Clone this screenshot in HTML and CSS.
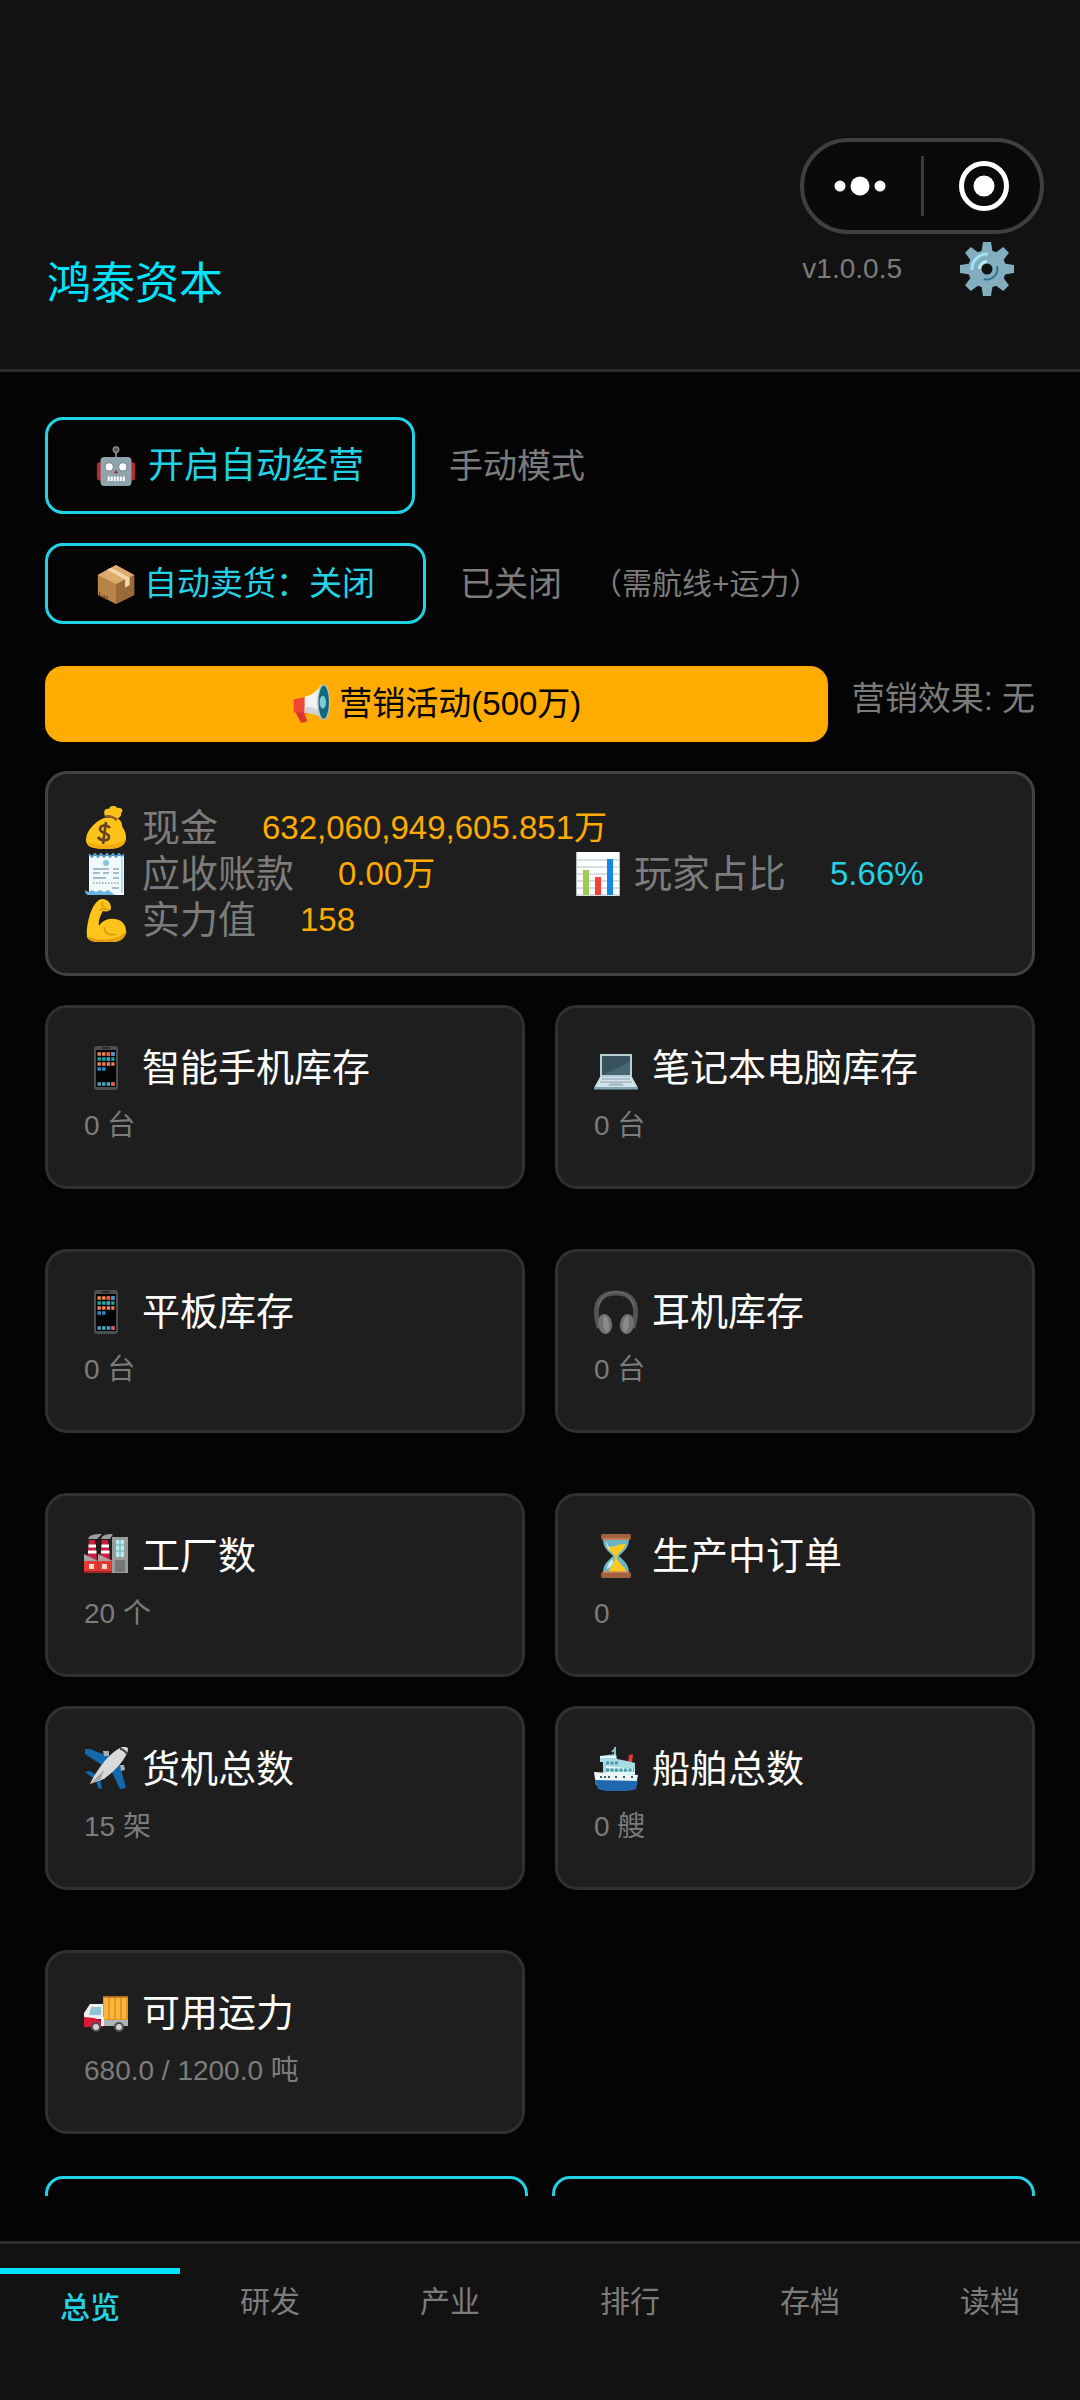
FILE: index.html
```
<!DOCTYPE html>
<html lang="zh-CN">
<head>
<meta charset="utf-8">
<meta name="viewport" content="width=device-width, initial-scale=1">
<title>鸿泰资本</title>
<link rel="stylesheet" href="styles.css">
</head>
<body>
<svg class="sprite" aria-hidden="true">
  <symbol id="i-phone" viewBox="0 0 44 44">
    <rect x="10" y="0" width="24" height="44" rx="3" fill="#4a4f52"/>
    <rect x="12" y="4" width="20" height="37" fill="#050505"/>
    <path d="M18 2h8" stroke="#222" stroke-width="1.5"/>
    <g stroke-width="3.4" fill="none">
      <path d="M13.500 8h17" stroke="#ef8a4b" stroke-dasharray="3.400 1.200"/>
      <path d="M13.500 13h17" stroke="#26a69a" stroke-dasharray="3.400 1.200"/>
      <path d="M13.500 18h17" stroke="#f0825f" stroke-dasharray="3.400 1.200"/>
      <path d="M13.500 23h8" stroke="#2b8fc9" stroke-dasharray="3.400 1.200"/>
      <path d="M13.500 38h17" stroke="#4fa9c4" stroke-dasharray="3.400 1.200"/>
      <path d="M27.300 8h3.400M22.700 13h3.400" stroke="#3f9be0"/>
      <path d="M22.700 8h3.400M27.300 38h3.400" stroke="#ef5350"/>
    </g>
  </symbol>
  <symbol id="i-gear" viewBox="0 0 54 54">
    <g fill="#82aebf">
      <g id="teeth"><path d="M23 0h8l2 13H21zM23 54h8l2-13H21z"/><path d="M0 23v8l13 2V21zM54 23v8l-13 2V21z"/></g>
      <use href="#teeth" transform="rotate(45 27 27)"/>
      <circle cx="27" cy="27" r="19"/>
    </g>
    <path d="M12 28A15 15 0 0 1 28 12" fill="none" stroke="#9fe3f4" stroke-width="3"/>
    <path d="M37 24A10.500 10.500 0 0 1 24 37" fill="none" stroke="#2f7889" stroke-width="2"/>
    <path d="M19.500 27a7.500 7.500 0 0 1 7.500-7.500" fill="none" stroke="#b5edf7" stroke-width="3"/>
    <circle cx="27" cy="27" r="5.500" fill="#121212"/>
  </symbol>
  <symbol id="i-robot" viewBox="0 0 44 44">
    <rect x="1" y="18" width="8" height="20" rx="3" fill="#b52a2d"/><rect x="35" y="18" width="8" height="20" rx="3" fill="#b52a2d"/>
    <path d="M22 5v9" stroke="#858585" stroke-width="2"/><circle cx="22" cy="4" r="3" fill="#555" stroke="#919191" stroke-width="1.500"/>
    <rect x="5" y="12" width="34" height="32" rx="4" fill="#8fa4ad"/>
    <circle cx="14.500" cy="23" r="4.500" fill="#fff" stroke="#667a83"/><circle cx="29.500" cy="23" r="4.500" fill="#fff" stroke="#667a83"/>
    <path d="M22 26l2.500 4h-5z" fill="#b71c35"/>
    <path d="M13 36h19" stroke="#fff" stroke-width="5" stroke-dasharray="2.200 1.100"/>
  </symbol>
  <symbol id="i-box" viewBox="0 0 44 44">
    <path d="M22 1l20 11v22L22 44 2 34V12z" fill="#b78348"/>
    <path d="M22 22L42 12v22L22 44z" fill="#9a693a"/>
    <path d="M22 1l20 11-20 10L2 12z" fill="#dcac6d"/>
    <path d="M12 6l20 11v9l5-3v-8L17 4z" fill="#f3d8ae"/>
    <path d="M4 31v4l3 1m2-2v4m3-3v4" fill="none" stroke="#6f471f" stroke-width="1.500"/>
  </symbol>
  <symbol id="i-horn" viewBox="0 0 44 44">
    <path d="M3 17l14-3v19L3 31z" fill="#ef4638"/><path d="M5 31h9l4 10-7 2z" fill="#d93630"/>
    <path d="M15 14C24 12 29 7 33 1l4 38c-6-5-12-7-22-7z" fill="#f0f2f2"/>
    <path d="M15 25c9 0 15 3 21 8v6c-7-5-12-7-21-7z" fill="#cfd5d8"/>
    <ellipse cx="36" cy="20" rx="6.500" ry="19" fill="#12677a" stroke="#b5c5cb" stroke-width="1.500"/>
    <ellipse cx="35" cy="20" rx="3.500" ry="7" fill="#7fcbd6"/>
  </symbol>
  <symbol id="i-money" viewBox="0 0 44 44">
    <path d="M20 12C12 15 2 24 2 34c0 7 7 9 20 9s20-3 20-11c0-8-4-10-4-13 0-4-4-7-7-8z" fill="#fcc419"/>
    <path d="M3 35c5 5 30 6 38-2-1 8-8 10-19 10S4 41 3 35z" fill="#f3ad12"/>
    <path d="M21 10c-2-5 0-8 4-7 1-4 7-4 8-1 5-1 7 3 4 5 1 3-2 6-6 5z" fill="#fbc01a"/>
    <path d="M21 11c4-2 8 0 12 3" fill="none" stroke="#8a5a28" stroke-width="2.500"/>
    <path d="M26 22c-3-4-10-3-10 1 0 5 9 3 9 8 0 4-8 5-11 0M22 16l-3 22" fill="none" stroke="#684123" stroke-width="2.600"/>
  </symbol>
  <symbol id="i-receipt" viewBox="0 0 44 44">
    <path d="M5 2l3 2 3-3 3 3 3-3 3 3 3-3 3 3 3-3 3 3 3-3 3 3 2-2v41H5z" fill="#f2f9fd"/>
    <path d="M5 2l3 3 3-3 3 3 3-3 3 3 3-3 3 3 3-3 3 3 3-3 3 3 2-3" fill="none" stroke="#4f9ccb" stroke-width="1.600"/>
    <path d="M1 38l3 2 4-2 4 2 4-2 4 2 4-2 7 5H6c-4 0-5-2-5-5z" fill="#6bb5e0"/>
    <path d="M38 4v37" stroke="#b5dcef" stroke-width="2"/>
    <circle cx="22" cy="11" r="3" fill="#85c4e4"/>
    <path d="M9 17h16m4 0h6M9 21h7m3 0h6m4 0h6M9 26h13m7 0h6M28 36h7" stroke="#8ba8b5" stroke-width="1.500"/>
    <path d="M9 31h26" stroke="#8ba8b5" stroke-width="1.300" stroke-dasharray="1.500 1.500"/>
  </symbol>
  <symbol id="i-arm" viewBox="0 0 44 44">
    <path d="M15 2c5-3 12 1 12 8 0 3-4 4-8 3-3 5-5 10-4 15 3-5 9-8 15-7 7 0 12 5 12 12 0 8-9 11-21 11-10 0-17-1-18-5C2 29 6 8 15 2z" fill="#fdc51b"/>
    <path d="M20 29c1 7 6 9 12 7M5 40c10 4 27 4 36-4-2 6-8 8-20 8-9 0-15-1-16-4zM16 12c3-2 6-1 9 0M19 4c-2 2-1 4 2 5" fill="none" stroke="#e39b10" stroke-width="1.800"/>
  </symbol>
  <symbol id="i-chart" viewBox="0 0 44 44">
    <path d="M0 0h44v44H0z" fill="#fff"/>
    <path d="M0 8h44M0 15h44M0 22h44M0 29h44M0 36h44M0 43h44M.500 0v44M43.500 0v44" stroke="#b2bec7" stroke-width="1.200"/>
    <path d="M7 18h6v25H7z" fill="#9ccc50"/><path d="M19 25h6v18h-6z" fill="#f44336"/><path d="M31 7h6v36h-6z" fill="#1588e5"/>
  </symbol>
  <symbol id="i-laptop" viewBox="0 0 44 44">
    <path d="M6 8h32v23H6z" fill="#b8ced6"/><path d="M8 10h28v19H8z" fill="#37525d"/><path d="M8 29l28-13v13z" fill="#456773"/>
    <path d="M6 31h32l6 11H0z" fill="#d4e4ec"/><path d="M8 33h28M6 36h32" stroke="#9eb5c0" stroke-width="1.300"/>
    <path d="M16 37h12l2 3H14z" fill="#abc0ca"/><path d="M0 41h44v2.500H0z" fill="#7fa6b7"/>
  </symbol>
  <symbol id="i-headset" viewBox="0 0 44 44">
    <path d="M5 38C-3 10 9 3 22 3s25 7 17 35" fill="none" stroke="#535353" stroke-width="5"/>
    <path d="M4 17C7 5 14 2 22 2s15 3 18 15" fill="none" stroke="#6b6b6b" stroke-width="1.500"/>
    <ellipse cx="11" cy="34" rx="7" ry="10" fill="#717171" transform="rotate(-8 11 34)"/><ellipse cx="33" cy="34" rx="7" ry="10" fill="#717171" transform="rotate(8 33 34)"/>
    <ellipse cx="12" cy="34" rx="3" ry="8" fill="#8a8a8a" transform="rotate(-8 12 34)"/><ellipse cx="32" cy="34" rx="3" ry="8" fill="#8a8a8a" transform="rotate(8 32 34)"/>
  </symbol>
  <symbol id="i-factory" viewBox="0 0 44 44">
    <path d="M5 6h6l2 20H3zM18 6h6l2 20H16z" fill="#c91f42"/>
    <path d="M4.500 12h7.500M4 18h8.500M17.500 12h7.500M17 18h8.500" stroke="#fff" stroke-width="3"/>
    <path d="M4 5c1-4 6-5 14-5l-5 5zM17 5c1-4 5-5 12-5l-3 5z" fill="#9e9e9e"/>
    <path d="M28 3h16v36H28z" fill="#9b9b9b"/><path d="M32 6h8v17h-8z" fill="#b6edf0"/>
    <path d="M32 11h8M32 17h8M36 6v17" stroke="#83bec4" stroke-width="1.500"/><path d="M31 26h10v12H31z" fill="#777"/>
    <path d="M0 21l14 6V20l14 6v13H0z" fill="#e53935"/><path d="M0 20l14 7V20l14 7H0z" fill="#a5a5a5"/>
    <path d="M5 30h5v5H5zM18 30h5v5h-5z" fill="#ffd9c4"/><path d="M0 38h28" stroke="#a32527" stroke-width="2"/><path d="M14 27v11" stroke="#b52a2b"/>
  </symbol>
  <symbol id="i-hourglass" viewBox="0 0 44 44">
    <path d="M9 5h26c0 9-5 12-10 17 5 5 10 8 10 17H9c0-9 5-12 10-17C14 17 9 14 9 5z" fill="#6fb3c4"/>
    <path d="M12 12c8 3 12-3 20-2-2 6-7 8-9 12v3c3 5 8 8 10 14H15c0-6 6-9 6-17-4-4-7-6-9-10z" fill="#fdcb20"/>
    <path d="M13 35c0-5 3-8 6-10v4c-1 3-3 5-6 6zM12 7c0 4 2 8 5 10" fill="#c3edf7"/>
    <rect x="7" y="0" width="30" height="6" rx="2" fill="#a3623d"/><rect x="7" y="38" width="30" height="6" rx="2" fill="#a3623d"/>
    <path d="M9 5h26M9 38h26" stroke="#d08a5b" stroke-width="1.500"/>
  </symbol>
  <symbol id="i-plane" viewBox="0 0 44 44">
    <path d="M1 2h5l22 9-7 9L1 7zM42 41l-6 1-9-19 8-8zM1 25l4-1 11 5-4 4zM18 42l-4-1-2-8 4-4z" fill="#1269ae"/>
    <path d="M19 4h6v5h-5zM36 18h4l1 5-4 1z" fill="#a9b0b4"/>
    <path d="M6 37C12 24 25 6 36 1c4-2 8-1 8 1 0 8-14 23-24 30z" fill="#dadada"/>
    <path d="M6 37l14-14-3 9z" fill="#a5a5a5"/><path d="M36 2c2 0 5 2 7 5" fill="none" stroke="#37474f" stroke-width="2"/>
  </symbol>
  <symbol id="i-ship" viewBox="0 0 44 44">
    <path d="M21 0v9M18 5l3-3" stroke="#8dbec8" stroke-width="2"/><path d="M35 8l4-1-1 9h-4z" fill="#e53935"/>
    <path d="M6 9l16-2 1 5 10 2 8 2v15H9V15H6z" fill="#a9dce2"/>
    <path d="M6 10h16M12 20l29 3M12 26h29" stroke="#e4fafa" stroke-width="2"/>
    <path d="M12 16h12M12 23h28" stroke="#4a9aab" stroke-width="3" stroke-dasharray="3 1.500"/>
    <path d="M0 25l44 3-2 10H2z" fill="#eef6f8"/><path d="M1 33l43 1-2 8c-8 3-31 3-38 0z" fill="#1f68ae"/>
    <path d="M6 30h10m5 0h3m5 0h3m5 0h3" stroke="#37617a" stroke-width="2" stroke-dasharray="2 2"/>
  </symbol>
  <symbol id="i-truck" viewBox="0 0 44 44">
    <path d="M19 5h25v26H19z" fill="#e99421"/><path d="M22 7v21M28 7v21M34 7v21M40 7v21" stroke="#f9b63d" stroke-width="4"/><path d="M19 5.700h25" stroke="#a56a1f" stroke-width="1.500"/>
    <path d="M19 29h25v6H19z" fill="#aeb5b7"/><path d="M0 22l6-9h13v15H0z" fill="#eee"/><path d="M7 16h10v8H5z" fill="#8fc3dc"/>
    <path d="M0 26l10 1 9 3v6H0z" fill="#d71935"/><path d="M17 26h3v9h-3z" fill="#f4f4f4"/>
    <circle cx="12" cy="36" r="4" fill="#d8cfcc" stroke="#505050" stroke-width="2"/><circle cx="35" cy="36" r="4" fill="#d8cfcc" stroke="#505050" stroke-width="2"/>
  </symbol>
</svg>

<header class="header">
  <h1 class="brand">鸿泰资本</h1>
  <div class="header-tools">
    <span class="version">v1.0.0.5</span>
    <button class="gear" type="button" aria-label="设置"><svg class="icon-gear"><use href="#i-gear"/></svg></button>
  </div>
  <div class="capsule">
    <button class="capsule-btn" type="button" aria-label="更多"><svg class="icon-dots" viewBox="0 0 54 20"><circle cx="7" cy="10" r="5.500"/><circle cx="27" cy="10" r="9.500"/><circle cx="47" cy="10" r="5.500"/></svg></button>
    <span class="capsule-line"></span>
    <button class="capsule-btn" type="button" aria-label="关闭"><svg class="icon-ring" viewBox="0 0 52 52"><circle class="ring" cx="26" cy="26" r="22.500"/><circle cx="26" cy="26" r="10.500"/></svg></button>
  </div>
</header>

<main class="content">
  <div class="row">
    <button class="btn btn-auto" type="button"><svg class="icon-s"><use href="#i-robot"/></svg>开启自动经营</button>
    <span class="status">手动模式</span>
  </div>
  <div class="row row-sell">
    <button class="btn btn-sell" type="button"><svg class="icon-s"><use href="#i-box"/></svg>自动卖货：关闭</button>
    <span class="status">已关闭</span>
    <span class="hint">（需航线+运力）</span>
  </div>
  <div class="row row-market">
    <button class="btn btn-market" type="button"><svg class="icon-s"><use href="#i-horn"/></svg>营销活动(500万)</button>
    <span class="effect">营销效果: 无</span>
  </div>

  <dl class="summary">
    <div class="stat stat-wide"><dt><svg class="icon"><use href="#i-money"/></svg>现金</dt><dd>632,060,949,605.851万</dd></div>
    <div class="stat"><dt><svg class="icon"><use href="#i-receipt"/></svg>应收账款</dt><dd>0.00万</dd></div>
    <div class="stat"><dt><svg class="icon"><use href="#i-chart"/></svg>玩家占比</dt><dd class="cyan">5.66%</dd></div>
    <div class="stat"><dt><svg class="icon"><use href="#i-arm"/></svg>实力值</dt><dd>158</dd></div>
  </dl>

  <section class="cards">
    <article class="card"><h2><svg class="icon"><use href="#i-phone"/></svg>智能手机库存</h2><p>0 台</p></article>
    <article class="card"><h2><svg class="icon"><use href="#i-laptop"/></svg>笔记本电脑库存</h2><p>0 台</p></article>
    <article class="card"><h2><svg class="icon"><use href="#i-phone"/></svg>平板库存</h2><p>0 台</p></article>
    <article class="card"><h2><svg class="icon"><use href="#i-headset"/></svg>耳机库存</h2><p>0 台</p></article>
    <article class="card"><h2><svg class="icon"><use href="#i-factory"/></svg>工厂数</h2><p>20 个</p></article>
    <article class="card"><h2><svg class="icon"><use href="#i-hourglass"/></svg>生产中订单</h2><p>0</p></article>
  </section>
  <section class="cards">
    <article class="card"><h2><svg class="icon"><use href="#i-plane"/></svg>货机总数</h2><p>15 架</p></article>
    <article class="card"><h2><svg class="icon"><use href="#i-ship"/></svg>船舶总数</h2><p>0 艘</p></article>
    <article class="card"><h2><svg class="icon"><use href="#i-truck"/></svg>可用运力</h2><p>680.0 / 1200.0 吨</p></article>
  </section>

  <div class="actions">
    <button class="btn" type="button" aria-label="操作一"></button>
    <button class="btn" type="button" aria-label="操作二"></button>
  </div>
</main>

<nav class="tabs">
  <a class="tab tab-active" href="#overview" aria-current="page">总览</a>
  <a class="tab" href="#research">研发</a>
  <a class="tab" href="#industry">产业</a>
  <a class="tab" href="#rank">排行</a>
  <a class="tab" href="#save">存档</a>
  <a class="tab" href="#load">读档</a>
</nav>
</body>
</html>
```
FILE: styles.css
```
:root {
  --cyan: #22d3e6;
  --gray: #7c7c7c;
  --amber: #ffab00;
  --panel: #1e1e1e;
}

* { box-sizing: border-box; margin: 0; padding: 0; }

body {
  display: flex;
  flex-direction: column;
  height: 100vh;
  background: #040404;
  color: var(--gray);
  font-family: "Liberation Sans", "Noto Sans CJK SC", sans-serif;
  font-weight: 400;
  line-height: 40px;
}

button { font: inherit; background: none; border: 0; cursor: pointer; }
svg { display: block; flex: none; }
.sprite { position: absolute; width: 0; height: 0; }
.icon { width: 44px; height: 44px; }
.icon-s { width: 40px; height: 40px; }

/* Header */
.header {
  position: relative;
  display: flex;
  justify-content: space-between;
  align-items: flex-end;
  padding: 242px 66px 57px 47px;
  background: #121212;
  border-bottom: 3px solid #2c2c2c;
}
.brand { font-size: 44px; line-height: 56px; font-weight: 400; color: #00e5ff; }
.header-tools { display: flex; align-items: center; gap: 58px; height: 54px; margin-bottom: 16px; }
.version { font-size: 28px; }
.icon-gear { width: 54px; height: 54px; }
.capsule {
  position: absolute;
  top: 138px;
  right: 36px;
  display: flex;
  align-items: center;
  width: 244px;
  height: 96px;
  border: 4px solid #3f3f3f;
  border-radius: 48px;
  background: #0a0a0a;
}
.capsule-btn { display: grid; place-items: center; flex: 1; height: 100%; fill: #fff; }
.capsule-line { width: 3px; height: 60px; margin: 0 4px; background: #3a3a3a; }
.icon-dots { width: 54px; height: 20px; }
.icon-ring { width: 52px; height: 52px; }
.ring { fill: none; stroke: #fff; stroke-width: 5; }

/* Scrolling content */
.content {
  flex: 1;
  min-height: 0;
  overflow: hidden;
  margin-bottom: 45px;
  padding: 45px 45px 0;
}
.row { display: flex; align-items: center; gap: 30px; margin-bottom: 29px; }
.row-sell { margin-bottom: 42px; }
.row-market { align-items: flex-start; gap: 24px; }
.btn {
  display: flex;
  align-items: center;
  justify-content: center;
  gap: 8px;
  padding: 0 48px;
  border: 3px solid var(--cyan);
  border-radius: 18px;
  color: var(--cyan);
  font-size: 33px;
  white-space: nowrap;
}
.btn-auto { height: 97px; gap: 12px; font-size: 36px; }
.btn-sell { height: 81px; }
.btn-market {
  flex: 1;
  height: 76px;
  border: 0;
  background: var(--amber);
  color: #000;
}
.status { padding-left: 4px; font-size: 34px; }
.hint { font-size: 30px; }
.effect { font-size: 33px; line-height: 66px; }

.summary {
  display: grid;
  grid-template-columns: 1fr 1fr;
  column-gap: 72px;
  margin-bottom: 29px;
  padding: 31px 36px 30px;
  border: 3px solid #424242;
  border-radius: 22px;
  background: var(--panel);
  font-size: 38px;
  line-height: 46px;
}
.stat, .stat dt { display: flex; align-items: center; }
.stat { gap: 44px; white-space: nowrap; }
.stat dt { gap: 14px; }
.stat-wide { grid-column: 1 / -1; }
.stat dd { color: var(--amber); font-size: 33px; }
.stat .cyan { color: var(--cyan); }

.cards {
  display: grid;
  grid-template-columns: 1fr 1fr;
  gap: 60px 30px;
  margin-bottom: 29px;
}
.card {
  height: 184px;
  padding: 36px;
  border: 3px solid #303030;
  border-radius: 22px;
  background: var(--panel);
}
.card h2 {
  display: flex;
  align-items: center;
  gap: 14px;
  margin-bottom: 14px;
  color: #fff;
  font-size: 38px;
  font-weight: 400;
  line-height: 48px;
}
.card p { font-size: 28px; line-height: 40px; }

.actions { display: grid; grid-template-columns: 1fr 1fr; gap: 24px; margin-top: 42px; }
.actions .btn { height: 97px; }

/* Bottom tabs */
.tabs {
  display: grid;
  grid-template-columns: repeat(6, 1fr);
  align-items: start;
  padding: 24px 0 72px;
  border-top: 3px solid #2c2c2c;
  background: #121212;
}
.tab {
  padding-top: 14px;
  color: var(--gray);
  font-size: 30px;
  line-height: 40px;
  text-align: center;
  text-decoration: none;
}
.tab-active { border-top: 6px solid #00e5ff; color: var(--cyan); font-weight: 500; }
```
